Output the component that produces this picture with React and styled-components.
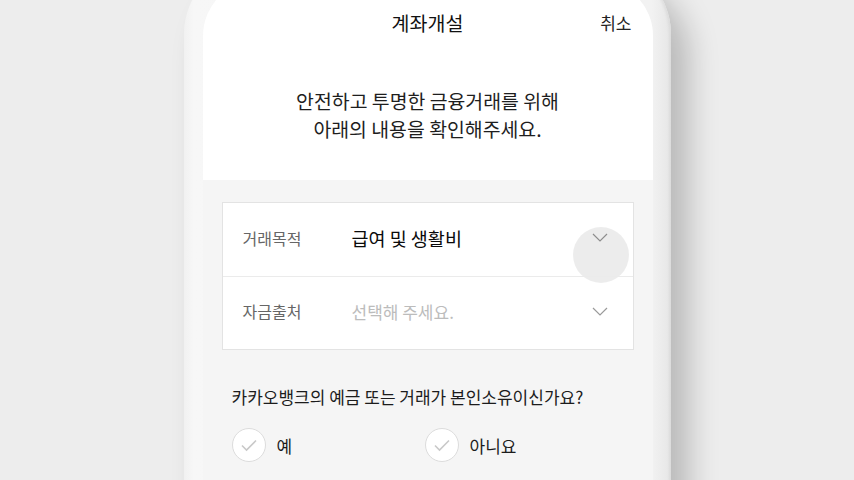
import React from 'react';
import styled, { createGlobalStyle } from 'styled-components';

const GlobalStyle = createGlobalStyle`
    html, body {
        margin: 0;
        background: #ededed;
        overflow: hidden;
    }
    body {
        font-family: "Noto Sans CJK KR", "Noto Sans", sans-serif;
        color: #222;
    }
`;

const Stage = styled.div`
    height: 480px;
    overflow: hidden;
    display: flex;
    justify-content: center;
`;

const Phone = styled.div`
    width: 450px;
    height: 560px;
    margin-top: -40px;
    padding: 20px 18px 0 19px;
    background: linear-gradient(90deg, #f1f1f1 0%, #f7f7f7 2%, #f4f4f4 50%, #f2f2f2 96%, #e6e6e6 100%);
    border-radius: 74px 74px 0 0;
    box-shadow: 18px 22px 30px rgba(0, 0, 0, 0.22), inset -2px 0 3px rgba(0, 0, 0, 0.05);
    flex-shrink: 0;
`;

const Screen = styled.div`
    height: 100%;
    background: #f5f5f5;
    border-radius: 56px 56px 0 0;
    overflow: hidden;
    display: flex;
    flex-direction: column;
`;

const Header = styled.div`
    background: #fff;
    padding-top: 20px;
`;

const TopBar = styled.div`
    height: 44px;
    display: grid;
    grid-template-columns: 1fr auto 1fr;
    align-items: center;
    padding: 0 21px;
`;

const Title = styled.h1`
    grid-column: 2;
    margin: 0;
    font-size: 19.5px;
    font-weight: 400;
    color: #111;
`;

const Cancel = styled.span`
    justify-self: end;
    font-size: 17px;
    color: #222;
`;

const Intro = styled.p`
    margin: 0;
    padding: 43px 0 37px;
    text-align: center;
    font-size: 19.4px;
    line-height: 28px;
    color: #1e1e1e;
`;

const Body = styled.div`
    padding: 22px 19px 0;
`;

const Card = styled.div`
    background: #fff;
    border: 1px solid #e3e3e3;
`;

const Row = styled.div`
    position: relative;
    height: 73px;
    box-sizing: border-box;
    display: flex;
    align-items: center;
    padding: 0 25px 4px 20px;
    & + & {
        height: 73px;
        border-top: 1px solid #ebebeb;
    }
`;

const Label = styled.span`
    width: 109px;
    font-size: 16px;
    color: #666;
`;

const Value = styled.span`
    flex: 1;
    font-size: ${p => (p.$placeholder ? '17px' : '18.5px')};
    color: ${p => (p.$placeholder ? '#bcbcbc' : '#0a0a0a')};
`;

const Ripple = styled.span`
    position: absolute;
    right: 4px;
    top: 24px;
    width: 56px;
    height: 56px;
    border-radius: 50%;
    background: rgba(0, 0, 0, 0.075);
`;

const Question = styled.p`
    margin: 35px 0 0;
    padding-left: 10px;
    font-size: 17px;
    line-height: 24px;
    color: #1c1c1c;
`;

const Options = styled.div`
    display: flex;
    padding-left: 10px;
    margin-top: 19px;
`;

const Option = styled.label`
    width: 193px;
    display: flex;
    align-items: center;
    gap: 11px;
    font-size: 17px;
    color: #1c1c1c;
`;

const Check = styled.span`
    width: 32px;
    height: 32px;
    border-radius: 50%;
    border: 1px solid #dcdcdc;
    background: #fff;
    display: flex;
    align-items: center;
    justify-content: center;
`;

const Chevron = () => (
    <svg width="16" height="9" viewBox="0 0 16 9" fill="none">
        <path d="M1 1l7 7 7-7" stroke="#9a9a9a" strokeWidth="1.2" />
    </svg>
);

const Tick = () => (
    <svg width="18" height="14" viewBox="0 0 18 14" fill="none">
        <path d="M2 7.5l4.5 4.5L16 2.5" stroke="#c9c9c9" strokeWidth="1.6" />
    </svg>
);

const App = () => {
    return (
        <Stage>
            <GlobalStyle />
            <Phone>
                <Screen>
                    <Header>
                        <TopBar>
                            <Title>계좌개설</Title>
                            <Cancel>취소</Cancel>
                        </TopBar>
                        <Intro>
                            안전하고 투명한 금융거래를 위해
                            <br />
                            아래의 내용을 확인해주세요.
                        </Intro>
                    </Header>

                    <Body>
                        <Card>
                            <Row>
                                <Label>거래목적</Label>
                                <Value>급여 및 생활비</Value>
                                <Ripple />
                                <Chevron />
                            </Row>
                            <Row>
                                <Label>자금출처</Label>
                                <Value $placeholder>선택해 주세요.</Value>
                                <Chevron />
                            </Row>
                        </Card>

                        <Question>카카오뱅크의 예금 또는 거래가 본인소유이신가요?</Question>
                        <Options>
                            <Option><Check><Tick /></Check>예</Option>
                            <Option><Check><Tick /></Check>아니요</Option>
                        </Options>
                    </Body>
                </Screen>
            </Phone>
        </Stage>
    );
};

export default App;
